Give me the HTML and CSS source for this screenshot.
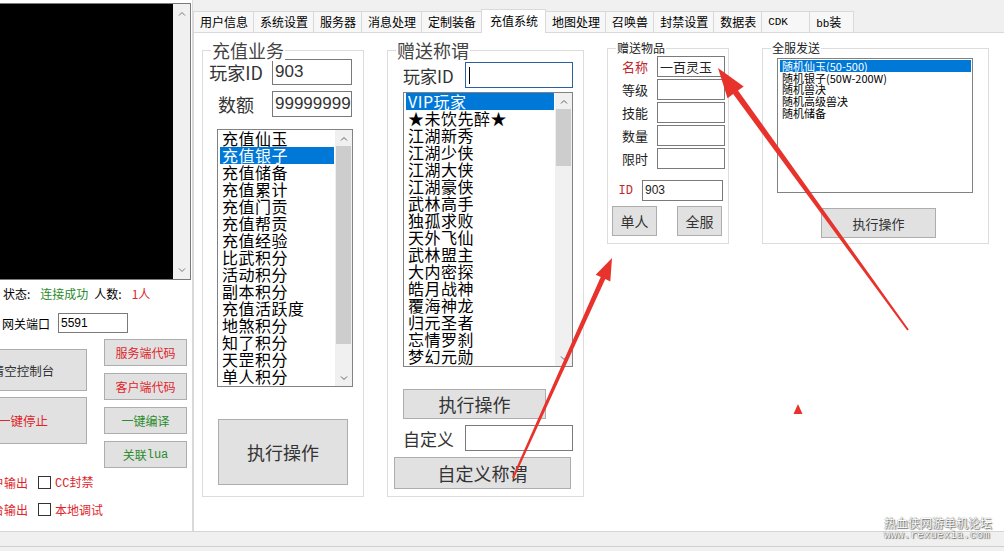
FILE: index.html
```html
<!DOCTYPE html>
<html lang="zh-CN">
<head>
  <meta charset="UTF-8" />
  <title>充值系统</title>
  <link rel="stylesheet" href="styles.css">
</head>
<body>
  <div class="screen">
    <div class="app">
      <!-- console + server controls -->
      <aside class="side">
        <div class="console">
          <div class="console-out"></div>
          <div class="sb">
            <span class="arr"><svg width="8" height="5" viewBox="0 0 8 5"><path d="M1 4.5 4 1.5 7 4.5" fill="none" stroke="#777"/></svg></span>
            <span class="track"></span>
            <span class="arr"><svg width="8" height="5" viewBox="0 0 8 5"><path d="M1 .5 4 3.5 7 .5" fill="none" stroke="#777"/></svg></span>
          </div>
        </div>

        <div class="status">
          <span>状态:</span>
          <span class="ok">连接成功</span>
          <span class="cnt-label">人数:</span>
          <span class="cnt">1人</span>
        </div>

        <div class="gate">
          <span>网关端口</span>
          <div class="edit edit-gate">5591</div>
        </div>

        <div class="ctrl">
          <div class="ctrl-big">
            <div class="btn b-clear">清空控制台</div>
            <div class="btn b-stop red">一键停止</div>
          </div>
          <div class="ctrl-small">
            <div class="btn red">服务端代码</div>
            <div class="btn red">客户端代码</div>
            <div class="btn green">一键编译</div>
            <div class="btn green">关联<span class="mono">lua</span></div>
          </div>
        </div>

        <div class="opts">
          <div class="opt">
            <span class="opt-cut"><span>用户输出</span></span>
            <span class="chk"></span>
            <span><span class="mono">CC</span>封禁</span>
          </div>
          <div class="opt">
            <span class="opt-cut"><span>控制台输出</span></span>
            <span class="chk"></span>
            <span>本地调试</span>
          </div>
        </div>
      </aside>

      <main class="main">
        <nav class="tabs">
          <span class="tab">用户信息</span>
          <span class="tab">系统设置</span>
          <span class="tab">服务器</span>
          <span class="tab">消息处理</span>
          <span class="tab">定制装备</span>
          <span class="tab on">充值系统</span>
          <span class="tab">地图处理</span>
          <span class="tab">召唤兽</span>
          <span class="tab">封禁设置</span>
          <span class="tab">数据表</span>
          <span class="tab tab-cdk mono">CDK</span>
          <span class="tab tab-bb"><span class="mono">bb</span>装</span>
        </nav>

        <section class="page">
          <!-- 充值业务 -->
          <div class="grp g-charge">
            <span class="lg">充值业务</span>
            <div class="row first">
              <span class="lbl">玩家ID</span>
              <div class="edit edit-big">903</div>
            </div>
            <div class="row">
              <span class="lbl">数额</span>
              <div class="edit edit-big">99999999</div>
            </div>
            <div class="listbox list-charge">
              <div class="items">
                <div class="li">充值仙玉</div>
                <div class="li sel">充值银子</div>
                <div class="li">充值储备</div>
                <div class="li">充值累计</div>
                <div class="li">充值门贡</div>
                <div class="li">充值帮贡</div>
                <div class="li">充值经验</div>
                <div class="li">比武积分</div>
                <div class="li">活动积分</div>
                <div class="li">副本积分</div>
                <div class="li">充值活跃度</div>
                <div class="li">地煞积分</div>
                <div class="li">知了积分</div>
                <div class="li">天罡积分</div>
                <div class="li">单人积分</div>
              </div>
              <div class="sb">
                <span class="arr"><svg width="8" height="5" viewBox="0 0 8 5"><path d="M1 4.5 4 1.5 7 4.5" fill="none" stroke="#606060"/></svg></span>
                <span class="thumb thumb-charge"></span>
                <span class="track"></span>
                <span class="arr"><svg width="8" height="5" viewBox="0 0 8 5"><path d="M1 .5 4 3.5 7 .5" fill="none" stroke="#606060"/></svg></span>
              </div>
            </div>
            <div class="btn b-exec-big">执行操作</div>
          </div>

          <!-- 赠送称谓 -->
          <div class="grp g-title">
            <span class="lg">赠送称谓</span>
            <div class="row first">
              <span class="lbl">玩家ID</span>
              <div class="edit edit-wide focus"><span class="caret"></span></div>
            </div>
            <div class="listbox list-title">
              <div class="items">
                <div class="li sel">VIP玩家</div>
                <div class="li">★未饮先醉★</div>
                <div class="li">江湖新秀</div>
                <div class="li">江湖少侠</div>
                <div class="li">江湖大侠</div>
                <div class="li">江湖豪侠</div>
                <div class="li">武林高手</div>
                <div class="li">独孤求败</div>
                <div class="li">天外飞仙</div>
                <div class="li">武林盟主</div>
                <div class="li">大内密探</div>
                <div class="li">皓月战神</div>
                <div class="li">覆海神龙</div>
                <div class="li">归元圣者</div>
                <div class="li">忘情罗刹</div>
                <div class="li">梦幻元勋</div>
              </div>
              <div class="sb">
                <span class="arr"><svg width="8" height="5" viewBox="0 0 8 5"><path d="M1 4.5 4 1.5 7 4.5" fill="none" stroke="#606060"/></svg></span>
                <span class="thumb thumb-title"></span>
                <span class="track"></span>
                <span class="arr"><svg width="8" height="5" viewBox="0 0 8 5"><path d="M1 .5 4 3.5 7 .5" fill="none" stroke="#606060"/></svg></span>
              </div>
            </div>
            <div class="btn b-exec-mid">执行操作</div>
            <div class="row">
              <span class="lbl">自定义</span>
              <div class="edit edit-wide"></div>
            </div>
            <div class="btn b-custom">自定义称谓</div>
          </div>

          <!-- 赠送物品 -->
          <div class="grp g-item">
            <span class="lg lg-sm">赠送物品</span>
            <div class="irow first">
              <span class="ilbl red">名称</span>
              <div class="edit edit-item">一百灵玉</div>
            </div>
            <div class="irow">
              <span class="ilbl">等级</span>
              <div class="edit edit-item"></div>
            </div>
            <div class="irow">
              <span class="ilbl">技能</span>
              <div class="edit edit-item"></div>
            </div>
            <div class="irow">
              <span class="ilbl">数量</span>
              <div class="edit edit-item"></div>
            </div>
            <div class="irow">
              <span class="ilbl">限时</span>
              <div class="edit edit-item"></div>
            </div>
            <div class="irow id-row">
              <span class="ilbl ilbl-id red mono">ID</span>
              <div class="edit edit-id">903</div>
            </div>
            <div class="pair">
              <div class="btn b-pair">单人</div>
              <div class="btn b-pair">全服</div>
            </div>
          </div>

          <!-- 全服发送 -->
          <div class="grp g-all">
            <span class="lg lg-sm">全服发送</span>
            <div class="listbox list-all">
              <div class="items">
                <div class="li sel">随机仙玉(50-500)</div>
                <div class="li">随机银子(50W-200W)</div>
                <div class="li">随机兽决</div>
                <div class="li">随机高级兽决</div>
                <div class="li">随机储备</div>
              </div>
            </div>
            <div class="btn b-exec-all">执行操作</div>
          </div>
        </section>
      </main>
    </div>

    <footer class="statusbar"><div class="statusbar-line"></div></footer>

    <!-- red markers drawn over the window -->
    <svg class="marks" width="1004" height="551" viewBox="0 0 1004 551">
      <polygon points="512.1,477.6 600.7,277.1 595.7,274.8 612,258 610.3,281.4 605.3,279.1 513.9,478.4" />
      <polygon points="907.2,330.6 733.2,94.1 727.5,98.2 718,68 743.7,86.4 738,90.5 908.8,329.4" />
      <polygon points="798,404 793.5,414 802.5,414" />
    </svg>

    <div class="watermark">
      <div>热血侠网游单机论坛</div>
      <div class="wm-url">www.rexuexia.com</div>
    </div>
  </div>
</body>
</html>
```

FILE: styles.css
```css
body {
  margin: 0;
  background: #f0f0f0;
  font-family: "Noto Sans CJK SC", sans-serif;
  color: #000;
}

.screen {
  position: relative;
  width: 1004px;
  height: 551px;
  overflow: hidden;
}

.app {
  display: flex;
  height: 531px;
}

.mono {
  font-family: "Liberation Mono", monospace;
}

.red {
  color: #e0242a;
}

.green {
  color: #2b8c2b;
}

/* generic controls */

.btn {
  display: flex;
  align-items: center;
  justify-content: center;
  box-sizing: border-box;
  background: #e1e1e1;
  border: 1px solid #adadad;
  color: #333;
  white-space: nowrap;
}

.edit {
  box-sizing: border-box;
  background: #fff;
  border: 1px solid #7a7a7a;
  white-space: nowrap;
  overflow: hidden;
  font-family: "Liberation Sans", "Noto Sans CJK SC", sans-serif;
}

.sb {
  width: 17px;
  flex: none;
  display: flex;
  flex-direction: column;
  background: #f0f0f0;
}

.sb .arr {
  height: 16px;
  flex: none;
  display: flex;
  align-items: center;
  justify-content: center;
}

.sb .track {
  flex: 1;
}

.sb .thumb {
  flex: none;
  margin: 0 1px;
  background: #cdcdcd;
}

/* left side: console and buttons */

.side {
  width: 193px;
  flex: none;
  box-sizing: border-box;
  background: #fff;
  border-right: 1px solid #dadada;
  font-size: 12px;
}

.console {
  display: flex;
  width: 191px;
  height: 277px;
  margin-top: 3px;
  box-sizing: border-box;
  border: 1px solid #7a7a7a;
  border-left: 0;
}

.console-out {
  flex: 1;
  background: #000;
}

.console .sb .arr {
  height: 18px;
}

.status {
  display: flex;
  height: 16px;
  line-height: 16px;
  margin-top: 6px;
  padding-left: 3px;
}

.status .ok {
  margin-left: 10px;
  color: #2b8c2b;
}

.status .cnt-label {
  margin-left: 6px;
}

.status .cnt {
  margin-left: 10px;
  color: #e0242a;
}

.gate {
  display: flex;
  align-items: center;
  height: 20px;
  margin-top: 11px;
  padding-left: 2px;
}

.edit-gate {
  width: 70px;
  height: 20px;
  margin-left: 8px;
  padding-left: 2px;
  font-size: 12px;
  line-height: 18px;
}

.ctrl {
  display: flex;
  margin-top: 6px;
}

.ctrl-big {
  display: flex;
  flex-direction: column;
  gap: 6px;
  width: 128px;
  margin-top: 10px;
  margin-left: -41px;
}

.ctrl-big .btn {
  font-size: 12.5px;
}

.b-clear {
  height: 42px;
}

.b-stop {
  height: 47px;
}

.ctrl-small {
  display: flex;
  flex-direction: column;
  gap: 7px;
  width: 83px;
  margin-left: 17px;
}

.ctrl-small .btn {
  height: 27px;
  font-size: 12px;
}

.ctrl .btn.red {
  color: #e0242a;
}

.ctrl .btn.green {
  color: #2b8c2b;
}

.opts {
  display: flex;
  flex-direction: column;
  gap: 13px;
  margin-top: 7px;
  color: #e0242a;
}

.opt {
  display: flex;
  align-items: center;
  height: 14px;
}

.opt-cut {
  display: flex;
  justify-content: flex-end;
  width: 28px;
  overflow: hidden;
  white-space: nowrap;
}

.chk {
  width: 13px;
  height: 13px;
  box-sizing: border-box;
  margin: 0 4px 0 10px;
  border: 1px solid #333;
  background: #fff;
}

/* tabs */

.main {
  flex: 1;
  display: flex;
  flex-direction: column;
  min-width: 0;
}

.tabs {
  display: flex;
  align-items: flex-end;
  height: 32px;
  flex: none;
}

.tab {
  height: 21px;
  box-sizing: border-box;
  padding: 0 5px 0 6px;
  border: 1px solid #d9d9d9;
  border-right: 0;
  border-bottom: 0;
  background: #f7f7f7;
  font-size: 12px;
  line-height: 20px;
  white-space: nowrap;
}

.tab.on {
  position: relative;
  z-index: 1;
  height: 24px;
  margin-bottom: -1px;
  padding: 0 7px 0 8px;
  background: #fff;
  border-right: 1px solid #d9d9d9;
  line-height: 22px;
}

.tab.on + .tab {
  border-left: 0;
}

.tab-cdk {
  width: 48px;
  font-size: 11px;
}

.tab-bb {
  width: 45px;
  border-right: 1px solid #d9d9d9;
}

.tab-bb .mono {
  font-size: 11px;
}

/* tab page */

.page {
  flex: 1;
  display: flex;
  align-items: flex-start;
  box-sizing: border-box;
  padding: 17px 0 0 8px;
  background: #fff;
  border: 1px solid #d9d9d9;
  border-right: 0;
  border-bottom: 0;
}

.grp {
  position: relative;
  flex: none;
  box-sizing: border-box;
  border: 1px solid #dcdcdc;
}

.lg {
  position: absolute;
  top: -12px;
  left: 8px;
  padding: 0 1px;
  background: #fff;
  color: #444;
  font-size: 18px;
  line-height: 22px;
}

.lg-sm {
  top: -9px;
  font-size: 12px;
  line-height: 16px;
  color: #222;
}

.row {
  display: flex;
  align-items: center;
  margin-top: 6px;
  color: #333;
  font-size: 18px;
}

.lbl {
  flex: none;
  white-space: nowrap;
}

.edit-big {
  width: 80px;
  height: 26px;
  margin-left: 9px;
  padding-left: 2px;
  font-size: 17px;
  line-height: 24px;
}

.edit-wide {
  position: relative;
  width: 108px;
  height: 26px;
  margin-left: 10px;
}

.edit.focus {
  border-color: #2c5f9e;
}

.caret {
  position: absolute;
  left: 3px;
  top: 4px;
  width: 1px;
  height: 17px;
  background: #000;
}

.listbox {
  display: flex;
  box-sizing: border-box;
  border: 1px solid #828282;
  background: #fff;
}

.items {
  flex: 1;
  min-width: 0;
  overflow: hidden;
  padding: 0 1px 0 2px;
}

.li {
  height: 17px;
  padding-left: 2px;
  font-size: 16px;
  line-height: 17px;
  letter-spacing: 0.5px;
  white-space: nowrap;
}

.li.sel {
  background: #0078d7;
  color: #fff;
}

/* 充值业务 */

.g-charge {
  width: 162px;
  height: 447px;
}

.g-charge .row {
  margin-left: 6px;
}

.g-charge .row.first {
  margin-top: 8px;
}

.g-charge .lbl {
  width: 54px;
  text-align: center;
}

.list-charge {
  width: 136px;
  height: 258px;
  margin: 12px 0 0 14px;
}

.thumb-charge {
  height: 198px;
}

.b-exec-big {
  width: 130px;
  height: 66px;
  margin: 32px 0 0 15px;
  font-size: 18px;
}

/* 赠送称谓 */

.g-title {
  width: 197px;
  height: 447px;
  margin-left: 23px;
}

.g-title .row {
  margin-left: 15px;
  font-size: 17px;
}

.g-title .row.first {
  margin-top: 11px;
}

.g-title .lbl {
  width: 52px;
}

.list-title {
  width: 170px;
  height: 275px;
  margin: 4px 0 0 15px;
}

.thumb-title {
  height: 57px;
}

.b-exec-mid {
  width: 143px;
  height: 30px;
  margin: 22px 0 0 15px;
  font-size: 18px;
}

.b-custom {
  width: 177px;
  height: 32px;
  margin: 6px 0 0 6px;
  font-size: 18px;
}

/* 赠送物品 */

.g-item {
  width: 122px;
  height: 196px;
  margin: -2px 0 0 23px;
}

.irow {
  display: flex;
  align-items: center;
  height: 21px;
  margin-top: 2px;
  font-size: 13px;
  color: #222;
}

.irow.first {
  margin-top: 7px;
}

.ilbl {
  width: 40px;
  text-align: right;
  flex: none;
}

.ilbl.red {
  color: #c0282d;
}

.edit-item {
  width: 68px;
  height: 21px;
  margin-left: 9px;
  padding-left: 2px;
  font-family: "Noto Sans CJK SC", sans-serif;
  font-size: 13px;
  line-height: 19px;
}

.id-row {
  margin-top: 11px;
}

.ilbl-id {
  width: 25px;
  font-size: 12px;
}

.edit-id {
  width: 81px;
  height: 21px;
  margin-left: 9px;
  padding-left: 2px;
  font-size: 12px;
  line-height: 19px;
}

.pair {
  display: flex;
  gap: 20px;
  margin-top: 5px;
  padding-left: 4px;
}

.b-pair {
  width: 45px;
  height: 30px;
  font-size: 14px;
}

/* 全服发送 */

.g-all {
  width: 227px;
  height: 196px;
  margin: -2px 0 0 33px;
}

.list-all {
  width: 196px;
  height: 135px;
  margin: 9px 0 0 14px;
}

.list-all .items {
  padding-top: 1px;
}

.list-all .li {
  height: 11.7px;
  font-size: 11px;
  line-height: 12px;
  letter-spacing: 0;
}

.b-exec-all {
  width: 115px;
  height: 30px;
  margin: 15px 0 0 58px;
  font-size: 13px;
}

/* bottom strip */

.statusbar {
  height: 20px;
  box-sizing: border-box;
  border-top: 1px solid #d5d5d5;
  background: #f0f0f0;
}

.statusbar-line {
  height: 14px;
  border-bottom: 1px solid #cfcfcf;
}

/* overlays */

.marks {
  position: absolute;
  top: 0;
  left: 0;
  pointer-events: none;
}

.marks polygon {
  fill: #e8322c;
}

.watermark {
  position: absolute;
  right: 12px;
  bottom: 10px;
  color: #fff;
  font-size: 12px;
  line-height: 13px;
  text-shadow: 0 0 1px #444, 1px 1px 1px #777;
}

.wm-url {
  font-family: "Liberation Mono", monospace;
  font-size: 11px;
  line-height: 12px;
}
```
